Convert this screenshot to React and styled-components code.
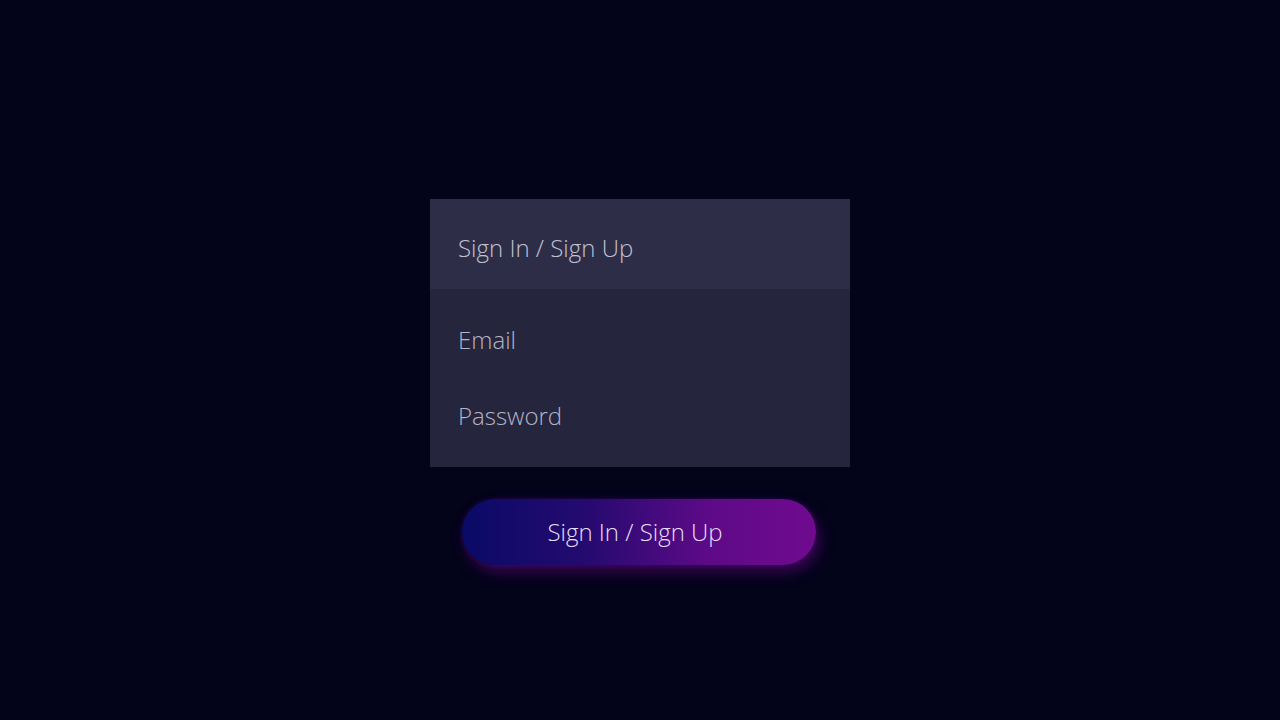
import React from 'react';
import styled, { createGlobalStyle } from 'styled-components';

const GlobalStyle = createGlobalStyle`
    html, body {
        margin: 0;
        padding: 0;
        background: #03031a;
    }
    body {
        font-family: "Open Sans", "Liberation Sans", sans-serif;
    }
`;

const StyledPage = styled.div`
    width: 1280px;
    height: 720px;
    display: flex;
    flex-direction: column;
    align-items: center;
    padding-top: 199px;
    box-sizing: border-box;
    background: #03031a;
`;

const StyledCard = styled.div`
    width: 420px;
    display: flex;
    flex-direction: column;
`;

const StyledHeader = styled.div`
    height: 90px;
    display: flex;
    align-items: flex-start;
    padding: 31px 0 0 28px;
    box-sizing: border-box;
    background: #2e2d47;
`;

const StyledBody = styled.div`
    height: 178px;
    display: flex;
    flex-direction: column;
    padding: 33px 0 0 28px;
    box-sizing: border-box;
    gap: 40px;
    background: #25253e;
`;

const StyledLabel = styled.span`
    font-size: 24px;
    font-weight: 300;
    line-height: 36px;
    color: ${props => (props.$muted ? '#b4b3c6' : '#c2c1d2')};
`;

const StyledButton = styled.button`
    margin: 32px 2px 0 0;
    width: 354px;
    height: 66px;
    border: none;
    border-radius: 33px;
    background: linear-gradient(90deg, #0a0a66 0%, #250a70 35%, #5e0a88 70%, #700a8e 100%);
    box-shadow: 4px 7px 14px rgba(110, 10, 140, 0.5), 0 0 5px rgba(50, 10, 110, 0.5);
    color: #e6def6;
    font-family: "Open Sans", "Liberation Sans", sans-serif;
    font-size: 24px;
    font-weight: 300;
    padding: 0 8px 2px 0;
    cursor: pointer;
`;

function App() {
    return (
        <>
            <GlobalStyle />
            <StyledPage>
                <StyledCard>
                    <StyledHeader>
                        <StyledLabel>Sign In / Sign Up</StyledLabel>
                    </StyledHeader>
                    <StyledBody>
                        <StyledLabel $muted>Email</StyledLabel>
                        <StyledLabel $muted>Password</StyledLabel>
                    </StyledBody>
                </StyledCard>
                <StyledButton>Sign In / Sign Up</StyledButton>
            </StyledPage>
        </>
    );
}

export default App;
